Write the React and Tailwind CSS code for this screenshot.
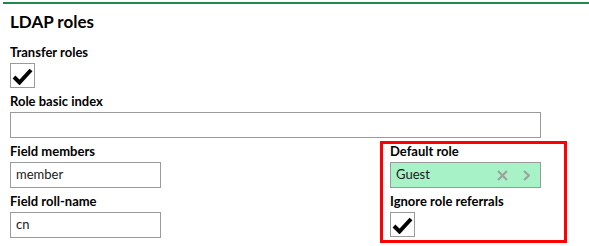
function Check() {
  return (
    <div className="mt-[1px] flex h-[25px] w-[25px] items-center justify-center border border-[#9a9a9a] bg-white">
      <svg width="21" height="18" viewBox="0 0 21 18">
        <path d="M2 10 L7.5 15.5 L19 3" fill="none" stroke="#000" strokeWidth="4" strokeLinecap="butt" strokeLinejoin="miter" />
      </svg>
    </div>
  )
}

function Label({ children }) {
  return <div className="pt-[4px] text-[13px] font-bold leading-[18px] text-black">{children}</div>
}

function TextInput({ value, className = '' }) {
  return (
    <div className={`mt-[2px] flex h-[26px] items-center border border-[#9a9a9a] bg-white px-[5px] text-[13px] text-[#1a1a1a] ${className}`}>
      {value}
    </div>
  )
}

export default function App() {
  return (
    <div className="relative h-[246px] w-[589px] overflow-hidden bg-white font-['Lato',sans-serif]">
      <div className="ml-[3px] mt-[2px] h-[2px] bg-[#1f8a4c]" />
      <div className="px-[10px]">
        <h2 className="mt-[7px] text-[17px] font-bold leading-[22px] text-black">LDAP roles</h2>
        <div className="mt-[6px]">
          <Label>Transfer roles</Label>
          <div className="pt-[1px]">
            <Check />
          </div>
        </div>
        <Label>Role basic index</Label>
        <TextInput value="" className="w-[531px]" />
        <div className="grid grid-cols-[151px_151px] gap-x-[229px]">
          <div>
            <Label>Field members</Label>
            <TextInput value="member" />
          </div>
          <div>
            <Label>Default role</Label>
            <div className="mt-[2px] flex h-[26px] items-center border border-[#9a9a9a] bg-[#a8f2c8] pl-[5px] pr-[10px] text-[13px] text-[#1a1a1a]">
              <span className="flex-1">Guest</span>
              <svg width="11" height="11" viewBox="0 0 11 11" className="mr-[15px]">
                <path d="M1 1 L10 10 M10 1 L1 10" stroke="#a0a0a0" strokeWidth="2.2" />
              </svg>
              <svg width="7" height="11" viewBox="0 0 7 11">
                <path d="M1 1 L6 5.5 L1 10" fill="none" stroke="#a0a0a0" strokeWidth="2.2" />
              </svg>
            </div>
          </div>
          <div>
            <Label>Field roll-name</Label>
            <TextInput value="cn" />
          </div>
          <div>
            <Label>Ignore role referrals</Label>
            <div className="mt-[2px]">
              <Check />
            </div>
          </div>
        </div>
      </div>
      <div className="absolute left-[380px] top-[141px] h-[102px] w-[187px] border-[3px] border-[#ff0000]" />
    </div>
  )
}
